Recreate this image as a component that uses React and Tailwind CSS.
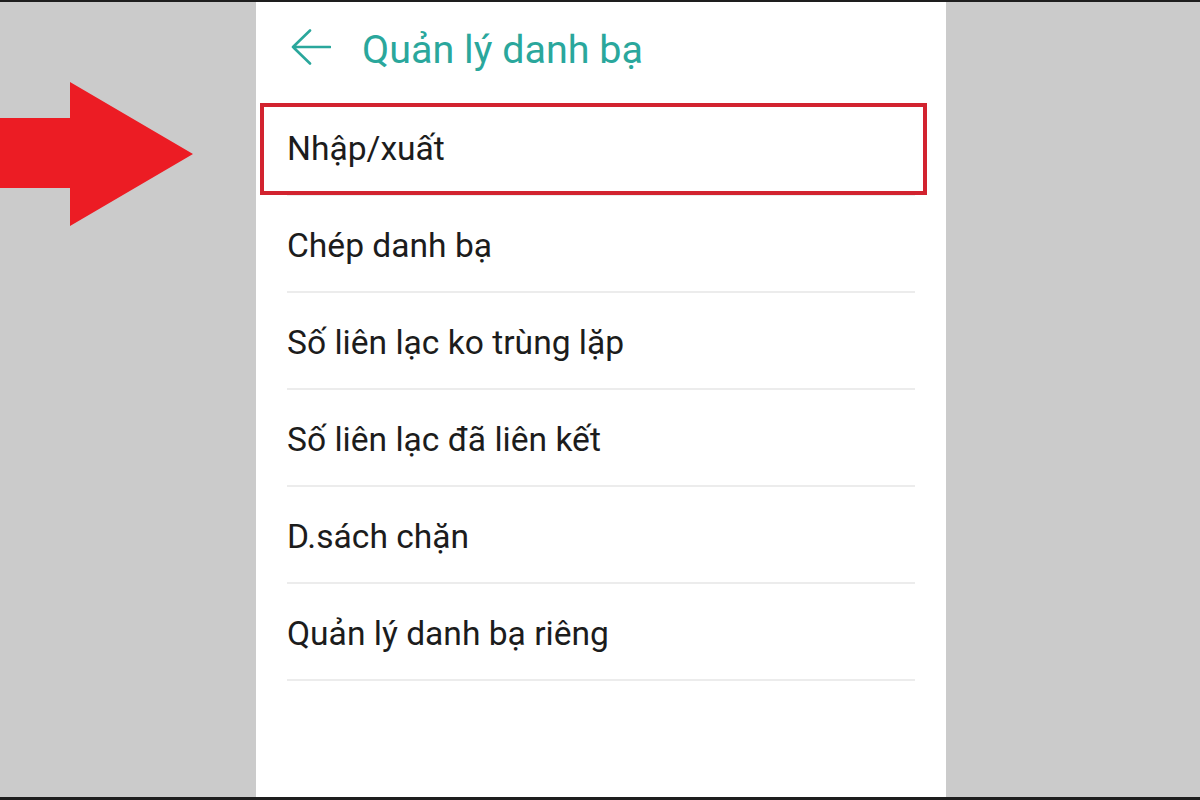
export default function App() {
  const rows = [
    "Nhập/xuất",
    "Chép danh bạ",
    "Số liên lạc ko trùng lặp",
    "Số liên lạc đã liên kết",
    "D.sách chặn",
    "Quản lý danh bạ riêng",
  ];
  return (
    <div
      className="flex h-[800px] w-[1200px] overflow-hidden border-t-2 border-b-[3px] border-[#1e1e1e] bg-[#cbcbcb]"
      style={{ fontFamily: "Roboto, 'Noto Sans', sans-serif" }}
    >
      <div className="w-[256px] shrink-0 pt-[80px]">
        <svg width="194" height="145" viewBox="0 0 194 145">
          <polygon
            points="0,36 70,36 70,0 193,72 70,144 70,106 0,106"
            fill="#ec1c24"
          />
        </svg>
      </div>
      <div className="flex w-[690px] shrink-0 flex-col bg-white">
        <div className="flex h-[97px] items-start pt-[19px] pl-[35px]">
          <div className="flex items-center">
            <svg width="40" height="36" viewBox="0 0 40 36" fill="none">
              <path
                d="M39 18H2M19 1.5L2 18L19 34.5"
                stroke="#2aa79c"
                strokeWidth="2.6"
                strokeLinecap="round"
                strokeLinejoin="round"
              />
            </svg>
            <span className="mt-[6px] ml-[31px] text-[39.5px] leading-[1.17] text-[#2aa79c]">
              Quản lý danh bạ
            </span>
          </div>
        </div>
        {rows.map((r, i) => (
          <div
            key={r}
            className="relative mx-[31px] box-border flex h-[97px] items-center border-b-2 border-[#ececec] text-[33.6px] text-[#1c1c1c]"
          >
            <span className="mt-[4px] leading-[1.17]">{r}</span>
            {i === 0 && (
              <div className="absolute top-[4px] -right-[12px] -bottom-[1px] -left-[27px] border-4 border-[#d2232f]" />
            )}
          </div>
        ))}
      </div>
    </div>
  );
}
